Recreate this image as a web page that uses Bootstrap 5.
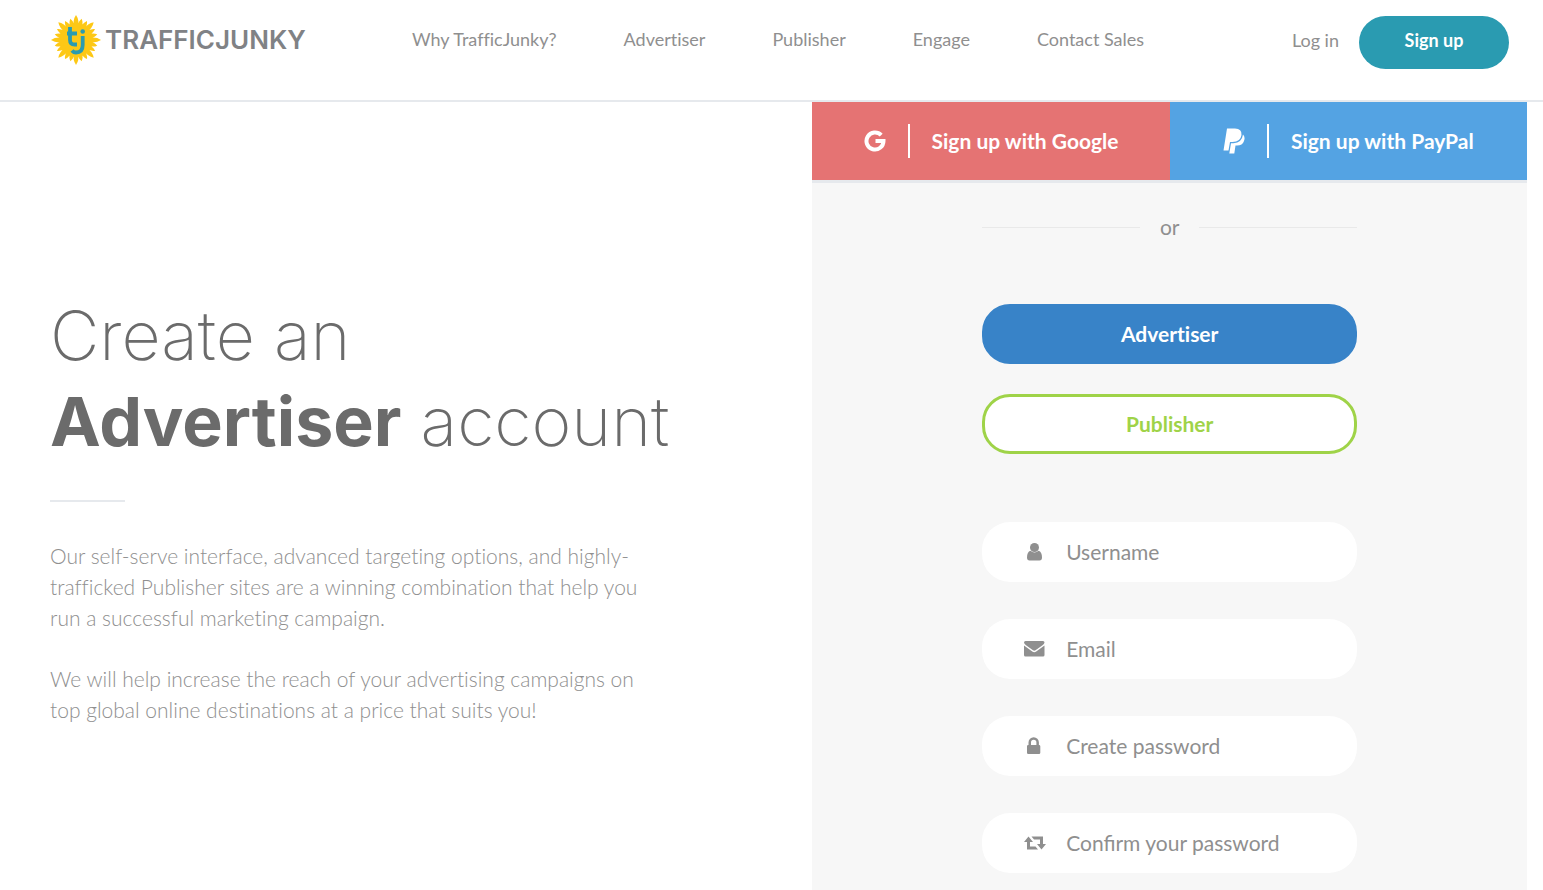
<!DOCTYPE html>
<html lang="en">
<head>
<meta charset="utf-8">
<meta name="viewport" content="width=device-width, initial-scale=1">
<title>TrafficJunky - Sign up</title>
<link href="https://cdn.jsdelivr.net/npm/bootstrap@5.3.0/dist/css/bootstrap.min.css" rel="stylesheet">
<style>
body{font-family:Lato,sans-serif;color:#8f8f8f;background:#fff}
.site-header{height:102px;border-bottom:2px solid #e6e9ed;padding:14px 34px 0 50px}
.brand-link{width:258px;height:52px;margin-right:104px}
.site-nav{gap:67px;font-size:18px;line-height:50px}
.site-nav,.intro-text,.btn-role{font-variant-ligatures:none}
.site-nav a,.login-link{color:#8f8f8f;text-decoration:none;white-space:nowrap}
.login-link{font-size:18px;line-height:52px}
.btn-join{width:150px;height:53px;margin-top:2px;padding:0 0 4px;border-radius:27px;background:#2a9bb1;color:#fff;font-size:18px;font-weight:700}
.signup-main{padding-right:16px}
.intro-side{width:53.2%;padding:190px 20px 0 50px}
.form-side{width:46.8%;background:#f7f7f7}
.headline{font-family:Inter,"Liberation Sans",sans-serif;font-weight:200;font-size:68px;line-height:86px;color:#6b6b6b;margin:0}
.headline strong{font-weight:700}
.short-rule{width:75px;height:2px;background:#e6e9ed;margin:36px 0 38px}
.intro-text{font-size:21px;font-weight:300;line-height:31px;max-width:596px}
.intro-text p{margin-bottom:30px}
.social-row{border-bottom:3px solid #e6e9ed}
.btn-social{flex:1 1 0;height:78px;border-radius:0;border:0;color:#fff;font-size:21px;font-weight:700;padding:0}
.btn-social:hover{color:#fff}
.btn-google,.btn-google:hover{background:#e57373}
.btn-paypal,.btn-paypal:hover{background:#54a3e3}
.bar-sep{width:2px;height:34px;background:#fff;margin:0 22px}
.signup-form{width:375px;max-width:100%;padding:28px 0 16px}
.or-row{gap:20px;font-size:21px;line-height:32px;margin-bottom:61px}
.or-row span:empty{flex:1;height:1px;background:#e9e9e9}
.btn-role{height:60px;border-radius:28px;font-size:21px;font-weight:700;border:3px solid #3883c8}
.btn-adv{background:#3883c8;color:#fff;margin-bottom:30px}
.btn-pub{background:#fff;color:#9fd348;border-color:#9fd348;margin-bottom:68px}
.field-box{height:60px;border-radius:28px;background:#fff;padding:0 28px 0 40px;margin-bottom:37px}
.field-box:last-child{margin-bottom:0}
.field-box svg{fill:#8f8f8f;display:block}
.field-box label{width:25px;margin-right:19px}
.field-box input{border:0;padding:0;background:transparent;font-size:21px;color:#8f8f8f;box-shadow:none}
.field-box input::placeholder{color:#8f8f8f;opacity:1}
</style>
</head>
<body class="d-flex flex-column min-vh-100">
<header class="site-header d-flex align-items-start">
  <a class="brand-link flex-shrink-0" href="#" aria-label="TrafficJunky">
    <svg width="258" height="52" viewBox="0 0 258 52">
      <defs>
        <path id="ray" d="M26 1Q29.500 6 28 13H24Q22.500 6 26 1Z"/>
        <path id="ray2" d="M26 4Q29 8 28 13H24Q23 8 26 4Z"/>
        <g id="quad"><use href="#ray"/><use href="#ray2" transform="rotate(15 26 26)"/><use href="#ray2" transform="rotate(30 26 26)"/><use href="#ray" transform="rotate(45 26 26)"/><use href="#ray2" transform="rotate(60 26 26)"/><use href="#ray2" transform="rotate(75 26 26)"/></g>
      </defs>
      <g fill="#fdc816"><circle cx="26" cy="26" r="17"/><use href="#quad"/><use href="#quad" transform="rotate(90 26 26)"/><use href="#quad" transform="rotate(180 26 26)"/><use href="#quad" transform="rotate(270 26 26)"/></g>
      <g fill="none" stroke="#2a9bb1" stroke-width="3.800"><path d="M20 13V26Q20 30.500 24.500 30.500H27M17 19.500H27"/><path d="M32.700 22V31Q32.700 38.500 26 38.500Q23.500 38.500 22 36.500"/></g>
      <circle cx="32.700" cy="17.500" r="2.300" fill="#2a9bb1"/>
      <text x="55" y="35" font-family="Inter, sans-serif" font-size="26" font-weight="600" fill="#808285">TRAFFICJUNKY</text>
    </svg>
  </a>
  <nav class="site-nav d-flex" aria-label="Main">
    <a href="#">Why TrafficJunky?</a><a href="#">Advertiser</a><a href="#">Publisher</a><a href="#">Engage</a><a href="#">Contact Sales</a>
  </nav>
  <div class="d-flex align-items-start ms-auto flex-shrink-0 gap-3">
    <a class="login-link me-1" href="#">Log in</a>
    <button class="btn btn-join" type="button">Sign up</button>
  </div>
</header>
<main class="signup-main d-flex flex-grow-1">
  <section class="intro-side">
    <h1 class="headline">Create an<br><strong>Advertiser</strong> account</h1>
    <div class="short-rule"></div>
    <div class="intro-text">
      <p>Our self-serve interface, advanced targeting options, and highly-trafficked Publisher sites are a winning combination that help you run a successful marketing campaign.</p>
      <p class="mb-0">We will help increase the reach of your advertising campaigns on top global online destinations at a price that suits you!</p>
    </div>
  </section>
  <section class="form-side">
    <div class="social-row d-flex">
      <button class="btn btn-social btn-google d-flex align-items-center justify-content-center" type="button">
        <svg width="22" height="22" viewBox="0 0 22 22" fill="none" stroke="#fff" stroke-width="4"><path d="M17.200 5.200A8.500 8.500 0 1 0 19.500 11H11.500"/></svg>
        <span class="bar-sep"></span><span>Sign up with Google</span>
      </button>
      <button class="btn btn-social btn-paypal d-flex align-items-center justify-content-center" type="button">
        <svg width="22" height="26" viewBox="0 0 22 26" fill="#fff"><path d="M4 .5H12Q19 .5 18.500 7Q17.500 14 9.500 14H7L5.500 22.500H.5Z"/><path d="M20 6.500Q22.500 9 21 13Q19.500 17.500 14 17.500H12.500L11.300 25.500H6.300L8 15.200H10.500Q18.800 15 20 6.500Z"/></svg>
        <span class="bar-sep"></span><span>Sign up with PayPal</span>
      </button>
    </div>
    <form class="signup-form mx-auto">
      <div class="or-row d-flex align-items-center"><span></span><span>or</span><span></span></div>
      <button class="btn btn-role btn-adv w-100 d-block" type="button">Advertiser</button>
      <button class="btn btn-role btn-pub w-100 d-block" type="button">Publisher</button>
      <div class="field-box d-flex align-items-center">
        <label for="username" aria-label="Username"><svg width="25" height="20" viewBox="0 0 25 20"><circle cx="12.500" cy="5.500" r="4.500"/><path d="M8.500 8.800Q12.500 12 16.500 8.800Q20 10 20 15.500Q20 18.500 17.500 18.500H7.500Q5 18.500 5 15.500Q5 10 8.500 8.800Z"/></svg></label>
        <input class="form-control" id="username" type="text" placeholder="Username">
      </div>
      <div class="field-box d-flex align-items-center">
        <label for="email" aria-label="Email"><svg width="25" height="20" viewBox="0 0 25 20"><path d="M2 3.500Q2 2 3.500 2H21Q22.500 2 22.500 3.500Q22.300 5 20.500 6.300L13.500 11.300Q12.250 12.100 11 11.300L4 6.300Q2 4.800 2 3.500ZM2 6.500L10.300 12.500Q12.250 13.800 14.200 12.500L22.500 6.500V16Q22.500 17.500 21 17.500H3.500Q2 17.500 2 16Z"/></svg></label>
        <input class="form-control" id="email" type="email" placeholder="Email">
      </div>
      <div class="field-box d-flex align-items-center">
        <label for="password" aria-label="Create password"><svg width="25" height="20" viewBox="0 0 25 20"><path fill-rule="evenodd" d="M6.500 9V6.500A5.200 5.200 0 0 1 16.900 6.500V9H17Q18.300 9 18.300 10.300V16.700Q18.300 18 17 18H6.300Q5 18 5 16.700V10.300Q5 9 6.300 9ZM9 9H14.400V6.500A2.700 2.700 0 0 0 9 6.500Z"/></svg></label>
        <input class="form-control" id="password" type="password" placeholder="Create password">
      </div>
      <div class="field-box d-flex align-items-center">
        <label for="confirm" aria-label="Confirm your password"><svg width="25" height="20" viewBox="0 0 25 20"><path d="M6.500 3.500L11 9H8V13.500H13.500L16 16.500H5V9H2Z"/><path d="M19.500 16.500L15 11H18V6.500H12L9.500 3.500H21V11H24Z"/></svg></label>
        <input class="form-control" id="confirm" type="password" placeholder="Confirm your password">
      </div>
    </form>
  </section>
</main>
<script src="https://cdn.jsdelivr.net/npm/bootstrap@5.3.0/dist/js/bootstrap.bundle.min.js"></script>
</body>
</html>
